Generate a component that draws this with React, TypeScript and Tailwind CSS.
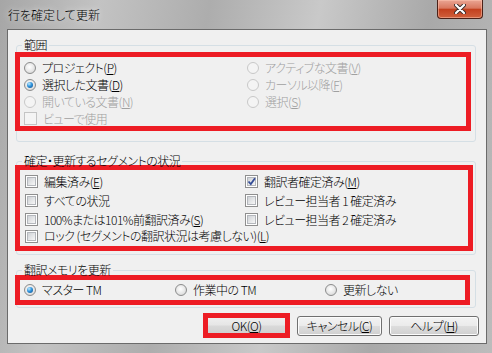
import type { ReactNode } from "react";

function Radio({ checked = false, disabled = false }: { checked?: boolean; disabled?: boolean }) {
  return (
    <span
      className={`flex h-[12px] w-[12px] shrink-0 items-center justify-center rounded-full border ${
        disabled
          ? "border-[#c8c8c8] bg-[#f4f4f4]"
          : "border-[#8b8c8c] bg-[radial-gradient(circle_at_45%_40%,#ffffff_0%,#e6e6e6_55%,#c9c9c9_100%)]"
      }`}
    >
      {checked && (
        <span className="h-[6px] w-[6px] rounded-full bg-[radial-gradient(circle_at_35%_30%,#bfeaff_0%,#2f93dc_45%,#0b4a86_100%)]" />
      )}
    </span>
  );
}

function Check({ checked = false, disabled = false }: { checked?: boolean; disabled?: boolean }) {
  return (
    <span
      className={`flex h-[13px] w-[13px] shrink-0 items-center justify-center border ${
        disabled ? "border-[#c4c4c4] bg-[#f4f4f4]" : "border-[#8f8f8f] bg-white"
      }`}
    >
      {!disabled && (
        <span className="relative h-[9px] w-[9px] border border-[#b4b7bc] bg-[linear-gradient(135deg,#cfd2d6,#f7f7f7)]">
          {checked && (
            <svg viewBox="0 0 9 9" className="absolute -left-[1px] -top-[1px] h-[9px] w-[9px] overflow-visible">
              <path d="M1.5 4.5 L3.8 7 L8 1.2" fill="none" stroke="#354d97" strokeWidth="1.8" />
            </svg>
          )}
        </span>
      )}
    </span>
  );
}

function Item({ control, children, disabled = false }: { control: ReactNode; children: ReactNode; disabled?: boolean }) {
  return (
    <div className="flex items-center gap-[6px] whitespace-nowrap">
      {control}
      <span className={disabled ? "text-[#a0a0a0]" : "text-black"}>{children}</span>
    </div>
  );
}

function U({ children }: { children: ReactNode }) {
  return <span className="underline underline-offset-[1px]">{children}</span>;
}

function Btn({ children, className = "" }: { children: ReactNode; className?: string }) {
  return (
    <div
      className={`flex h-[20px] items-center justify-center rounded-[3px] border border-[#707070] bg-[linear-gradient(#f3f3f3_0%,#ebebeb_48%,#dddddd_52%,#cfcfcf_100%)] shadow-[inset_0_0_0_1px_#fcfcfc] ${className}`}
    >
      {children}
    </div>
  );
}

export default function App() {
  return (
    <div className="flex h-[353px] w-[492px] flex-col bg-[linear-gradient(100deg,#a6a6a6_0%,#c3c3c3_18%,#adadad_38%,#c9c9c9_58%,#a9a9a9_78%,#bcbcbc_100%)] font-['Noto_Sans_CJK_JP','Liberation_Sans',sans-serif] text-[12px] font-light leading-[14px] tracking-[-0.5px] [font-feature-settings:'palt']">
      {/* Title bar */}
      <div className="flex h-[29px] shrink-0 items-start">
        <div className="pl-[8px] pt-[7px] leading-[15px] tracking-normal text-black [text-shadow:0_0_6px_rgba(255,255,255,0.9)]">
          行を確定して更新
        </div>
        <div className="ml-auto mr-[9px] flex h-[19px] w-[46px] items-center justify-center rounded-b-[4px] border border-t-0 border-[#4b2118] bg-[linear-gradient(#eaa594_0%,#d9785f_45%,#c3401f_52%,#d0603c_100%)] shadow-[inset_0_0_0_1px_rgba(255,200,180,0.5)]">
          <svg viewBox="0 0 12 10" className="h-[10px] w-[12px]">
            <path d="M2 1 L10 9 M10 1 L2 9" stroke="#3a2a28" strokeWidth="4" strokeLinecap="round" />
            <path d="M2 1 L10 9 M10 1 L2 9" stroke="#ffffff" strokeWidth="2.2" strokeLinecap="round" />
          </svg>
        </div>
      </div>

      {/* Client area */}
      <div className="mb-[9px] ml-[7px] mr-[5px] flex flex-1 flex-col border border-[#6b6b6b] bg-[#f0f0f0]">
        {/* 範囲 */}
        <fieldset className="ml-[8px] mt-[9px] w-[460px] rounded-[3px] border border-[#d5dfe5] pb-[10px]">
          <legend className="ml-[5px] px-[2px] leading-[12px]">範囲</legend>
          <div className="-ml-[2px] mt-[1px] h-[79px] w-[456px] border-[5px] border-[#ed1c24]">
            <div className="grid grid-cols-[223px_1fr] pl-[4px] pt-[2px] [&>div]:h-[17px]">
              <Item control={<Radio />}>
                プロジェクト(<U>P</U>)
              </Item>
              <Item control={<Radio disabled />} disabled>
                アクティブな文書(<U>V</U>)
              </Item>
              <Item control={<Radio checked />}>
                選択した文書(<U>D</U>)
              </Item>
              <Item control={<Radio disabled />} disabled>
                カーソル以降(<U>F</U>)
              </Item>
              <Item control={<Radio disabled />} disabled>
                開いている文書(<U>N</U>)
              </Item>
              <Item control={<Radio disabled />} disabled>
                選択(<U>S</U>)
              </Item>
              <Item control={<Check disabled />} disabled>
                ビューで使用
              </Item>
            </div>
          </div>
        </fieldset>

        {/* 状況 */}
        <fieldset className="ml-[8px] mt-[13px] w-[460px] rounded-[3px] border border-[#d5dfe5] pb-[3px]">
          <legend className="ml-[5px] px-[2px] leading-[12px]">確定・更新するセグメントの状況</legend>
          <div className="-ml-[2px] -mt-[2px] h-[86px] w-[458px] border-[5px] border-[#ed1c24]">
            <div className="grid grid-cols-[220px_1fr] pl-[5px] pt-[2px] [&>div]:h-[19px]">
              <Item control={<Check />}>
                編集済み(<U>E</U>)
              </Item>
              <Item control={<Check checked />}>
                翻訳者確定済み(<U>M</U>)
              </Item>
              <Item control={<Check />}>すべての状況</Item>
              <Item control={<Check />}>レビュー担当者 1 確定済み</Item>
              <Item control={<Check />}>
                100%または101%前翻訳済み(<U>S</U>)
              </Item>
              <Item control={<Check />}>レビュー担当者 2 確定済み</Item>
              <div className="col-span-2">
                <Item control={<Check />}>
                  ロック (セグメントの翻訳状況は考慮しない)(<U>L</U>)
                </Item>
              </div>
            </div>
          </div>
        </fieldset>

        {/* 翻訳メモリ */}
        <fieldset className="ml-[8px] mt-[9px] w-[460px] rounded-[3px] border border-[#d5dfe5] pb-[2px]">
          <legend className="ml-[5px] px-[2px] leading-[12px]">翻訳メモリを更新</legend>
          <div className="-ml-[2px] -mt-[1px] flex h-[30px] w-[455px] items-center border-[5px] border-[#ed1c24] pl-[4px]">
            <div className="w-[151px]">
              <Item control={<Radio checked />}>マスター TM</Item>
            </div>
            <div className="w-[150px]">
              <Item control={<Radio />}>作業中の TM</Item>
            </div>
            <Item control={<Radio />}>更新しない</Item>
          </div>
        </fieldset>

        {/* Buttons */}
        <div className="mt-[5px] flex items-center justify-end pr-[7px]">
          <div className="h-[25px] w-[87px] border-[5px] border-[#ed1c24]">
            <div className="flex h-full items-center justify-center bg-[linear-gradient(#eeeeee_0%,#e6e6e6_45%,#d9d9d9_55%,#d0d0d0_100%)]">
              OK(<U>O</U>)
            </div>
          </div>
          <Btn className="ml-[7px] w-[85px]">
            キャンセル(<U>C</U>)
          </Btn>
          <Btn className="ml-[7px] w-[90px]">
            ヘルプ(<U>H</U>)
          </Btn>
        </div>
      </div>
    </div>
  );
}
